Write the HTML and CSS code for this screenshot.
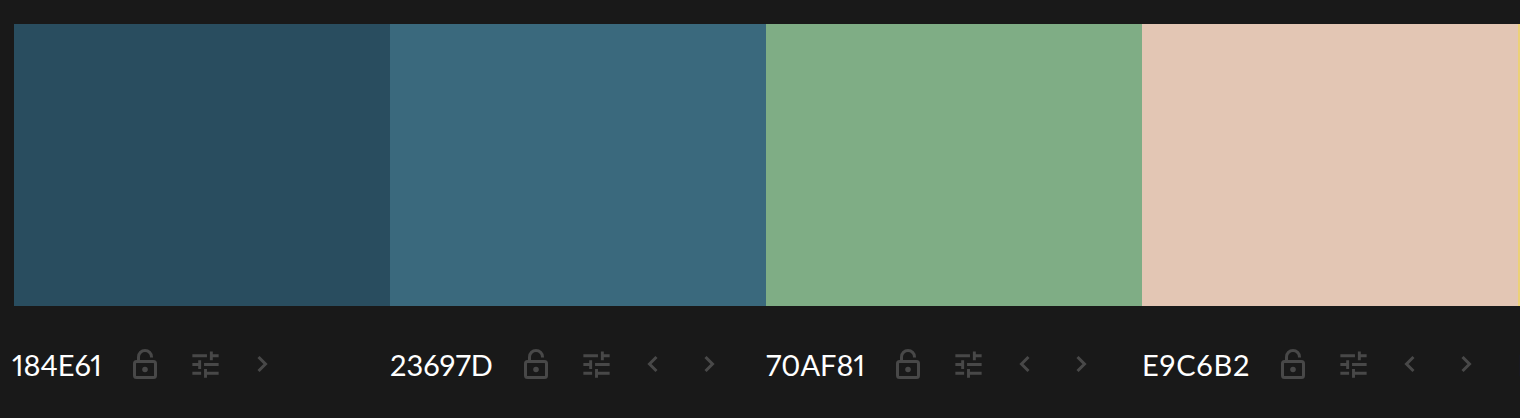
FILE: index.html
```html
<!DOCTYPE html>
<html>
<head>
    <title>Paleta</title>
    <link rel="stylesheet" href="styles.css">
</head>
<body>
    <svg class="sprites" width="0" height="0">
        <symbol id="i-lock" viewBox="0 0 24 30">
            <path d="M5.5 12.5V8a6.5 6.5 0 0 1 13 0v.5" />
            <rect x="1.5" y="12.5" width="21" height="16" rx="2" />
            <circle class="solid" cx="12" cy="20.5" r="2.8" />
        </symbol>
        <symbol id="i-sliders" viewBox="0 0 24 24">
            <path class="solid" d="M3 17v2h6v-2H3zM3 5v2h10V5H3zm10 16v-2h8v-2h-8v-2h-2v6h2zM7 9v2H3v2h4v2h2V9H7zm14 4v-2H11v2h10zm-6-4h2V7h4V5h-4V3h-2v6z" />
        </symbol>
        <symbol id="i-prev" viewBox="0 0 12 20">
            <path d="M9.5 3l-7 7 7 7" />
        </symbol>
        <symbol id="i-next" viewBox="0 0 12 20">
            <path d="M2.5 3l7 7-7 7" />
        </symbol>
    </svg>

    <div class="palette">
        <div class="color first">
            <div class="swatch s1"></div>
            <div class="info">
                <span class="hex">184E61</span>
                <button class="btn lock"><svg><use href="#i-lock"/></svg></button>
                <button class="btn sliders"><svg><use href="#i-sliders"/></svg></button>
                <button class="btn chev"><svg><use href="#i-next"/></svg></button>
            </div>
        </div>
        <div class="color">
            <div class="swatch s2"></div>
            <div class="info">
                <span class="hex">23697D</span>
                <button class="btn lock"><svg><use href="#i-lock"/></svg></button>
                <button class="btn sliders"><svg><use href="#i-sliders"/></svg></button>
                <button class="btn chev"><svg><use href="#i-prev"/></svg></button>
                <button class="btn chev"><svg><use href="#i-next"/></svg></button>
            </div>
        </div>
        <div class="color">
            <div class="swatch s3"></div>
            <div class="info">
                <span class="hex">70AF81</span>
                <button class="btn lock"><svg><use href="#i-lock"/></svg></button>
                <button class="btn sliders"><svg><use href="#i-sliders"/></svg></button>
                <button class="btn chev"><svg><use href="#i-prev"/></svg></button>
                <button class="btn chev"><svg><use href="#i-next"/></svg></button>
            </div>
        </div>
        <div class="color">
            <div class="swatch s4"></div>
            <div class="info">
                <span class="hex wide">E9C6B2</span>
                <button class="btn lock"><svg><use href="#i-lock"/></svg></button>
                <button class="btn sliders"><svg><use href="#i-sliders"/></svg></button>
                <button class="btn chev"><svg><use href="#i-prev"/></svg></button>
                <button class="btn chev"><svg><use href="#i-next"/></svg></button>
            </div>
        </div>
        <div class="color">
            <div class="swatch s5"></div>
            <div class="info">
                <span class="hex">EDCF6F</span>
            </div>
        </div>
    </div>
</body>
</html>
```

FILE: styles.css
```css
html, body {
    margin: 0;
    height: 100%;
    overflow: hidden;
    background-color: #191919;
}
.sprites {
    display: block;
    height: 0;
}
.palette {
    display: flex;
    padding: 24px 0 0 14px;
    width: 1900px;
}
.color {
    flex: 0 0 376px;
}
.swatch {
    height: 282px;
}
.s1 { background-color: #294d5f; }
.s2 { background-color: #3a697d; }
.s3 { background-color: #7fad85; }
.s4 { background-color: #e3c6b4; }
.s5 { background-color: #ecd177; }
.info {
    display: flex;
    align-items: center;
    height: 40px;
    margin-top: 38px;
}
.first .info {
    margin-left: -2px;
}
.hex {
    font-family: Lato, sans-serif;
    font-size: 29px;
    font-variant-numeric: proportional-nums;
    color: #fff;
}
.wide {
    letter-spacing: 0.8px;
}
.btn {
    display: block;
    padding: 0;
    border: 0;
    background: none;
}
.btn svg {
    display: block;
    width: 100%;
    height: 100%;
    fill: none;
    stroke: #484848;
    stroke-width: 3;
}
.solid {
    fill: #484848;
    stroke: none;
}
.lock {
    width: 24px;
    height: 30px;
    margin-left: 31px;
}
.sliders {
    width: 35px;
    height: 35px;
    margin-left: 31px;
}
.chev {
    width: 12px;
    height: 20px;
    margin-left: 44px;
}
.sliders + .chev {
    margin-left: 33px;
}
```
